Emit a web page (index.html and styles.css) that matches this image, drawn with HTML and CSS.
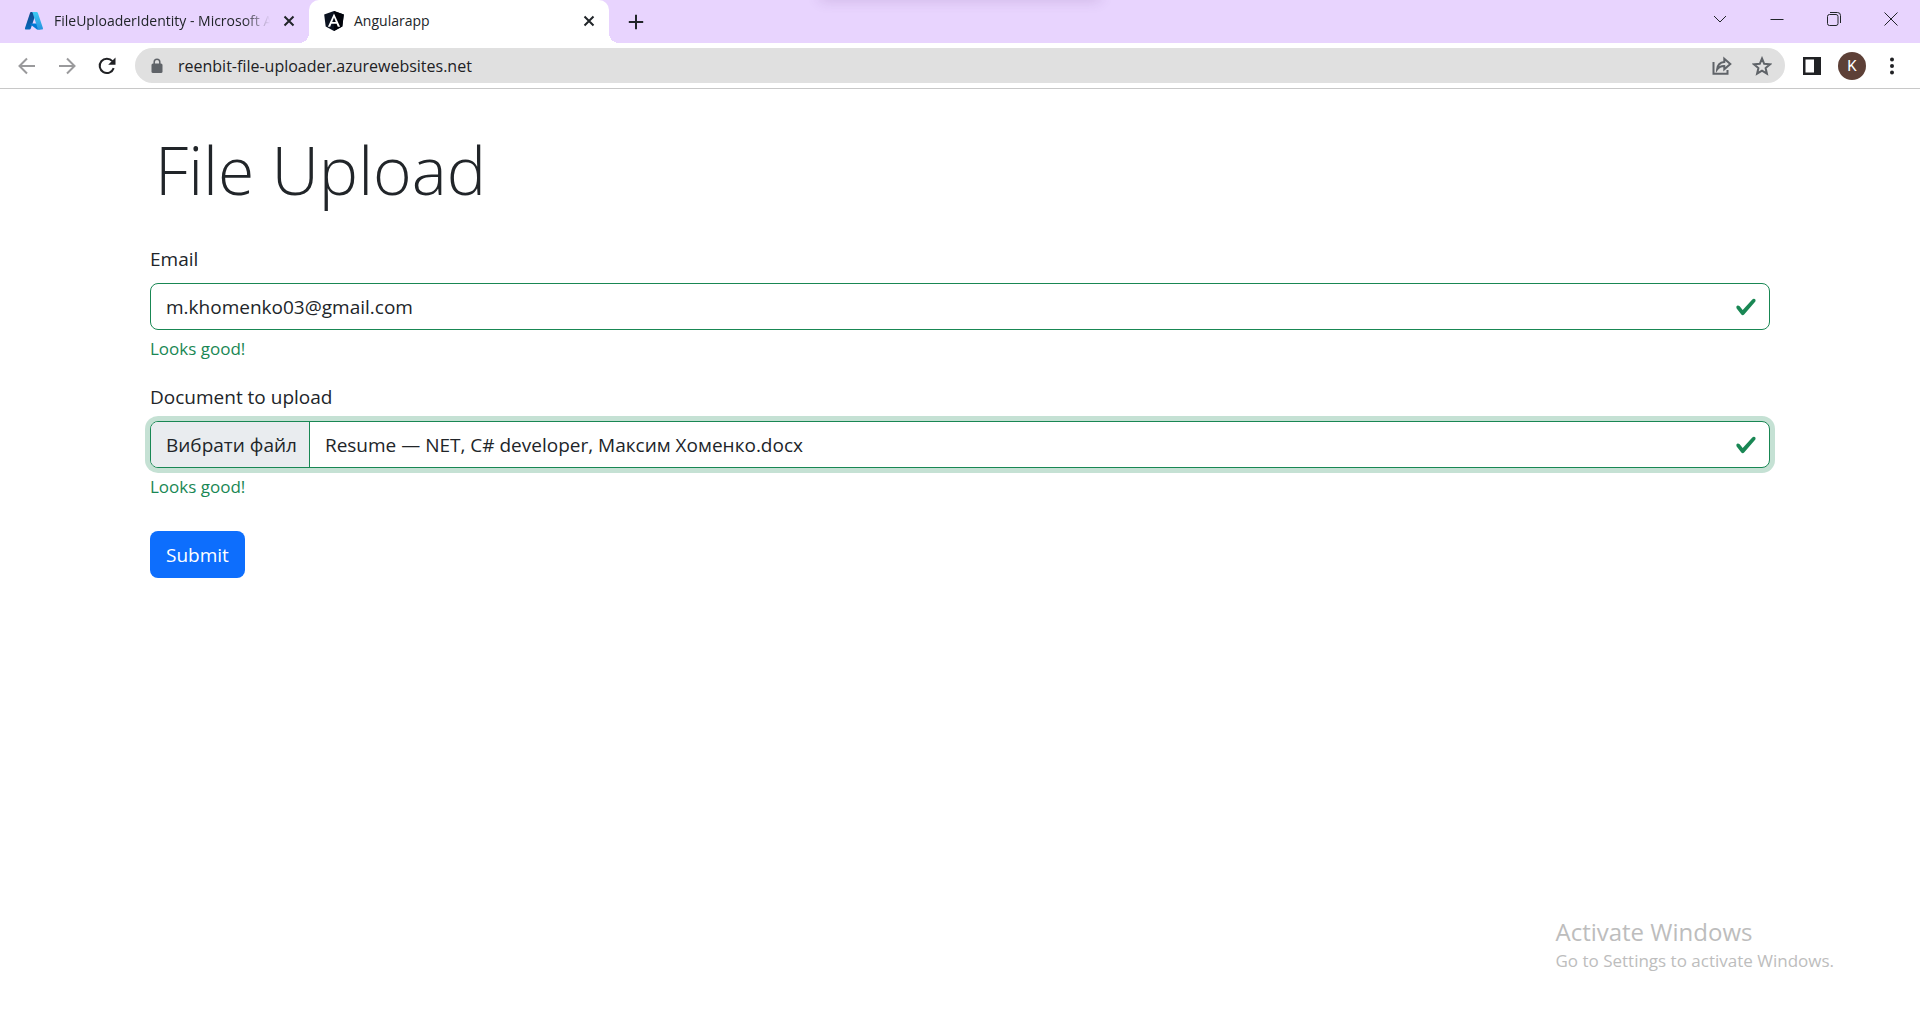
FILE: index.html
```html
<!DOCTYPE html>
<html lang="uk">
<head>
<meta charset="utf-8">
<title>Angularapp</title>
<link rel="stylesheet" href="styles.css">
</head>
<body>
<header class="browser">
  <div class="tab-strip">
    <div class="tab">
      <svg class="favicon" viewBox="0 0 20 20" aria-hidden="true">
        <defs>
          <linearGradient id="az-a" x1="0" y1="0" x2="0" y2="1"><stop offset="0" stop-color="#114a8b"/><stop offset="1" stop-color="#0669bc"/></linearGradient>
          <linearGradient id="az-b" x1="0" y1="0" x2="0" y2="1"><stop offset="0" stop-color="#3ccbf4"/><stop offset="1" stop-color="#2892df"/></linearGradient>
        </defs>
        <path d="M7 1h5.400L6.800 17.600a1.400 1.400 0 0 1-1.300.9H2.200A1.200 1.200 0 0 1 1 16.900L6 1.900A1.300 1.300 0 0 1 7 1Z" fill="url(#az-a)"/>
        <path d="M6.500 12.500h8l2 5.900h-3.500L6.200 13.300c-.4-.4-.2-.8.300-.8Z" fill="#0078d4"/>
        <path d="M7.500 1h5.200a1.300 1.300 0 0 1 1.200.9l5 15a1.200 1.200 0 0 1-1.200 1.600h-5.400a1.200 1.200 0 0 0 1.200-1.600L8.700 1.900A1.300 1.300 0 0 0 7.500 1Z" fill="url(#az-b)"/>
      </svg>
      <span class="tab-title tab-title-fade">FileUploaderIdentity - Microsoft A</span>
      <button class="icon-button tab-close" aria-label="Close tab"><svg viewBox="0 0 12 12"><path d="M1.500 1.500l9 9M10.500 1.500l-9 9"/></svg></button>
    </div>
    <div class="tab tab-active">
      <svg class="favicon" viewBox="0 0 20 20" aria-hidden="true">
        <path d="M10 0l9.800 3.400-1.500 12.200L10 20l-8.300-4.400L.2 3.400Z" fill="#0b1220"/>
        <path d="M10 0l9.800 3.400-1.500 12.200L10 20Z" fill="#01030a"/>
        <path d="M10 2.400L3.900 15.700h2.300l1.200-3h5.200l1.200 3h2.300ZM10 6.600l1.800 4.300H8.200Z" fill="#fff"/>
      </svg>
      <span class="tab-title">Angularapp</span>
      <button class="icon-button tab-close" aria-label="Close tab"><svg viewBox="0 0 12 12"><path d="M1.500 1.500l9 9M10.500 1.500l-9 9"/></svg></button>
    </div>
    <button class="icon-button new-tab" aria-label="New tab"><svg viewBox="0 0 16 16"><path d="M8 .8v14.400M.8 8h14.400"/></svg></button>
    <div class="window-controls">
      <button class="icon-button" aria-label="Search tabs"><svg viewBox="0 0 14 14"><path d="M1 4l6 6 6-6"/></svg></button>
      <button class="icon-button" aria-label="Minimize"><svg viewBox="0 0 14 14"><path d="M.5 7.500h13"/></svg></button>
      <button class="icon-button" aria-label="Restore"><svg viewBox="0 0 14 14"><rect x=".5" y="2.500" width="10.500" height="11" rx="2"/><path d="M3 .5h7.500a3 3 0 0 1 3 3V11"/></svg></button>
      <button class="icon-button" aria-label="Close"><svg viewBox="0 0 14 14"><path d="M.5.500l13 13M13.500.500l-13 13"/></svg></button>
    </div>
  </div>
  <div class="toolbar">
    <div class="nav-buttons">
      <button class="icon-button nav-muted" aria-label="Back"><svg viewBox="0 0 20 20"><path d="M18 10H3M10 2.500L2.500 10l7.500 7.500"/></svg></button>
      <button class="icon-button nav-muted" aria-label="Forward"><svg viewBox="0 0 20 20"><path d="M2 10h15M10 2.500l7.500 7.500-7.500 7.500"/></svg></button>
      <button class="icon-button nav-reload" aria-label="Reload"><svg viewBox="0 0 20 20"><path d="M16.700 12.200A7.200 7.200 0 1 1 15.400 5.200"/><path class="solid" d="M18.500 1.500v7.300h-7.300Z"/></svg></button>
    </div>
    <div class="address-bar">
      <svg class="lock" viewBox="0 0 12 16" aria-hidden="true"><rect x=".5" y="5.500" width="11" height="9.500" rx="1.500" fill="#5f6368"/><path d="M3.200 6V4a2.800 2.800 0 0 1 5.600 0v2" fill="none" stroke="#5f6368" stroke-width="1.500"/></svg>
      <input class="url" type="text" aria-label="Address" value="reenbit-file-uploader.azurewebsites.net">
      <button class="icon-button" aria-label="Share"><svg viewBox="0 0 20 20"><path d="M1.500 6v11.800h14V14"/><path d="M12.300 2.800l6 5.200-6 5.200v-3.100c-3.300-.1-5.600 1.200-7.200 3.400.3-4 2.600-7.200 7.200-7.600Z"/></svg></button>
      <button class="icon-button" aria-label="Bookmark"><svg viewBox="0 0 20 20"><path d="M10 2.500l2.200 5.300 5.800.5-4.400 3.800 1.300 5.600-4.900-3-4.900 3 1.300-5.600L2 8.300l5.800-.5Z"/></svg></button>
    </div>
    <div class="toolbar-end">
      <button class="icon-button" aria-label="Side panel"><svg viewBox="0 0 20 20"><path class="solid" fill-rule="evenodd" d="M1 1h18v18H1ZM3.500 3.500v13h8.500v-13Z"/></svg></button>
      <button class="avatar" aria-label="Profile">K</button>
      <button class="icon-button" aria-label="Menu"><svg viewBox="0 0 20 20"><circle class="solid" cx="10" cy="3.500" r="2"/><circle class="solid" cx="10" cy="10" r="2"/><circle class="solid" cx="10" cy="16.500" r="2"/></svg></button>
    </div>
  </div>
</header>

<main class="container">
  <h1 class="title">File Upload</h1>
  <form class="form">
    <div class="field">
      <label class="label" for="email">Email</label>
      <div class="control">
        <input class="control-input" id="email" type="email" value="m.khomenko03@gmail.com">
        <svg class="check" viewBox="0 0 8 8" aria-hidden="true"><path fill="#198754" d="M2.300 6.730.6 4.530c-.4-1.040.46-1.400 1.100-.8l1.100 1.400 3.400-3.800c.6-.63 1.600-.27 1.200.7l-4 4.600c-.43.5-.8.4-1.100.1z"/></svg>
      </div>
      <p class="feedback">Looks good!</p>
    </div>
    <div class="field">
      <label class="label" for="document">Document to upload</label>
      <div class="control control-focus">
        <span class="file-button">Вибрати файл</span>
        <span class="file-name">Resume — NET, C# developer, Максим Хоменко.docx</span>
        <svg class="check" viewBox="0 0 8 8" aria-hidden="true"><path fill="#198754" d="M2.300 6.730.6 4.530c-.4-1.040.46-1.400 1.100-.8l1.100 1.400 3.400-3.800c.6-.63 1.600-.27 1.200.7l-4 4.600c-.43.5-.8.4-1.100.1z"/></svg>
        <input class="file-input" id="document" type="file">
      </div>
      <p class="feedback">Looks good!</p>
    </div>
    <button class="submit" type="submit">Submit</button>
  </form>
</main>

<aside class="watermark">
  <p class="watermark-title">Activate Windows</p>
  <p class="watermark-text">Go to Settings to activate Windows.</p>
</aside>
</body>
</html>
```

FILE: styles.css
```css
* { box-sizing: border-box; }

body {
  margin: 0;
  min-height: 100vh;
  position: relative;
  background: #fff;
  color: #212529;
  font-family: "Open Sans", "Noto Sans", sans-serif;
  font-size: 19px;
  line-height: 30px;
}

p { margin: 0; }

button, input { font: inherit; color: inherit; }

.icon-button {
  display: flex;
  align-items: center;
  justify-content: center;
  flex: none;
  padding: 0;
  border: 0;
  background: none;
}

.icon-button svg {
  width: 20px;
  height: 20px;
  fill: none;
  stroke: currentColor;
}

.icon-button .solid { fill: currentColor; stroke: none; }

/* Browser window */
.browser { border-bottom: 1px solid #c8c8c8; }

.tab-strip {
  position: relative;
  display: flex;
  height: 43px;
  padding-left: 9px;
  overflow: hidden;
  background: #e8d4fe;
}

/* Soft shadow cast from above the top edge */
.tab-strip::before {
  content: "";
  position: absolute;
  bottom: 100%;
  left: 50%;
  width: 280px;
  height: 10px;
  margin-left: -140px;
  box-shadow: 0 0 14px rgba(90, 40, 110, 0.2);
}

.tab {
  position: relative;
  display: flex;
  align-items: center;
  width: 300px;
  padding: 0 12px 2px 15px;
  font-size: 14px;
  line-height: 20px;
}

.tab-active {
  background: #fff;
  border-radius: 10px 10px 0 0;
}

/* Flared feet of the active tab */
.tab-active::before,
.tab-active::after {
  content: "";
  position: absolute;
  bottom: 0;
  width: 10px;
  height: 10px;
}

.tab-active::before {
  right: 100%;
  background: radial-gradient(circle at 0 0, transparent 10px, #fff 10px);
}

.tab-active::after {
  left: 100%;
  background: radial-gradient(circle at 100% 0, transparent 10px, #fff 10px);
}

.favicon { width: 20px; height: 20px; flex: none; }

.tab-title {
  flex: 1;
  margin: 0 6px 0 10px;
  white-space: nowrap;
}

.tab-title-fade {
  -webkit-mask-image: linear-gradient(to left, transparent 5px, #000 32px);
  mask-image: linear-gradient(to left, transparent 5px, #000 32px);
}

.tab-close { width: 16px; }
.tab-close svg { width: 12px; height: 12px; stroke-width: 2; }

.new-tab { width: 53px; }
.new-tab svg { width: 16px; height: 16px; stroke-width: 2; }

.window-controls {
  display: flex;
  height: 37px;
  margin-left: auto;
  padding-right: 1px;
}

.window-controls .icon-button { width: 57px; }
.window-controls svg { width: 14px; height: 14px; }

.toolbar {
  display: flex;
  align-items: center;
  height: 45px;
  padding: 0 11px 0 7px;
}

.nav-buttons { display: flex; width: 128px; }
.nav-buttons .icon-button { width: 40px; height: 40px; }
.nav-buttons svg { stroke-width: 2; }
.nav-muted { color: #9a9a9c; }
.nav-reload { color: #202124; }

.address-bar {
  display: flex;
  align-items: center;
  flex: 1;
  height: 35px;
  padding: 0 3px 0 16px;
  border-radius: 18px;
  background: #e0e0e0;
  color: #5f6368;
}

.address-bar .icon-button { width: 40px; height: 35px; }
.address-bar .icon-button svg { stroke-width: 2; }

.lock { width: 12px; height: 16px; flex: none; }

.url {
  flex: 1;
  min-width: 0;
  padding: 0 0 0 15px;
  border: 0;
  outline: 0;
  background: none;
  color: #202124;
  font-size: 16px;
}

.toolbar-end {
  display: flex;
  align-items: center;
  gap: 7px;
  padding-left: 10px;
  color: #202124;
}

.toolbar-end .icon-button { width: 34px; height: 34px; }

.avatar {
  width: 28px;
  height: 28px;
  margin: 0 2px;
  padding: 0;
  border: 0;
  border-radius: 50%;
  background: #5d4037;
  color: #fff;
  font-family: Roboto, sans-serif;
  font-size: 15px;
  line-height: 28px;
}

/* Upload page */
.container {
  max-width: 1650px;
  margin: 0 auto;
  padding: 38px 15px;
}

.title {
  margin: 0 0 33px;
  padding-left: 5px;
  font-size: 66px;
  font-weight: 300;
  line-height: 84px;
}

.field { margin-bottom: 20px; }

.label { display: block; margin-bottom: 9px; }

.control {
  position: relative;
  display: flex;
  align-items: center;
  height: 47px;
  border: 1px solid #198754;
  border-radius: 8px;
  background: #fff;
}

.control-focus { box-shadow: 0 0 0 5px rgba(25, 135, 84, 0.25); }

.control-input {
  flex: 1;
  min-width: 0;
  padding: 0 0 0 15px;
  border: 0;
  outline: 0;
  background: none;
}

.check { width: 22px; height: 22px; flex: none; margin-right: 12px; }

.file-button {
  align-self: stretch;
  padding: 8px 12px 7px 15px;
  border-right: 1px solid #198754;
  border-radius: 7px 0 0 7px;
  background: #e9ecef;
}

.file-name { flex: 1; padding-left: 15px; }

/* Native picker lies over the drawn control */
.file-input {
  position: absolute;
  inset: 0;
  width: 100%;
  opacity: 0;
}

.feedback {
  margin-top: 6px;
  color: #198754;
  font-size: 17px;
  line-height: 26px;
}

.submit {
  height: 47px;
  margin-top: 11px;
  padding: 0 16px;
  border: 0;
  border-radius: 8px;
  background: #0d6efd;
  color: #fff;
}

.watermark {
  position: absolute;
  right: 86px;
  bottom: 46px;
  color: #bdbdbd;
}

.watermark-title { font-size: 24px; line-height: 32px; }
.watermark-text { font-size: 17px; line-height: 26px; }
```
